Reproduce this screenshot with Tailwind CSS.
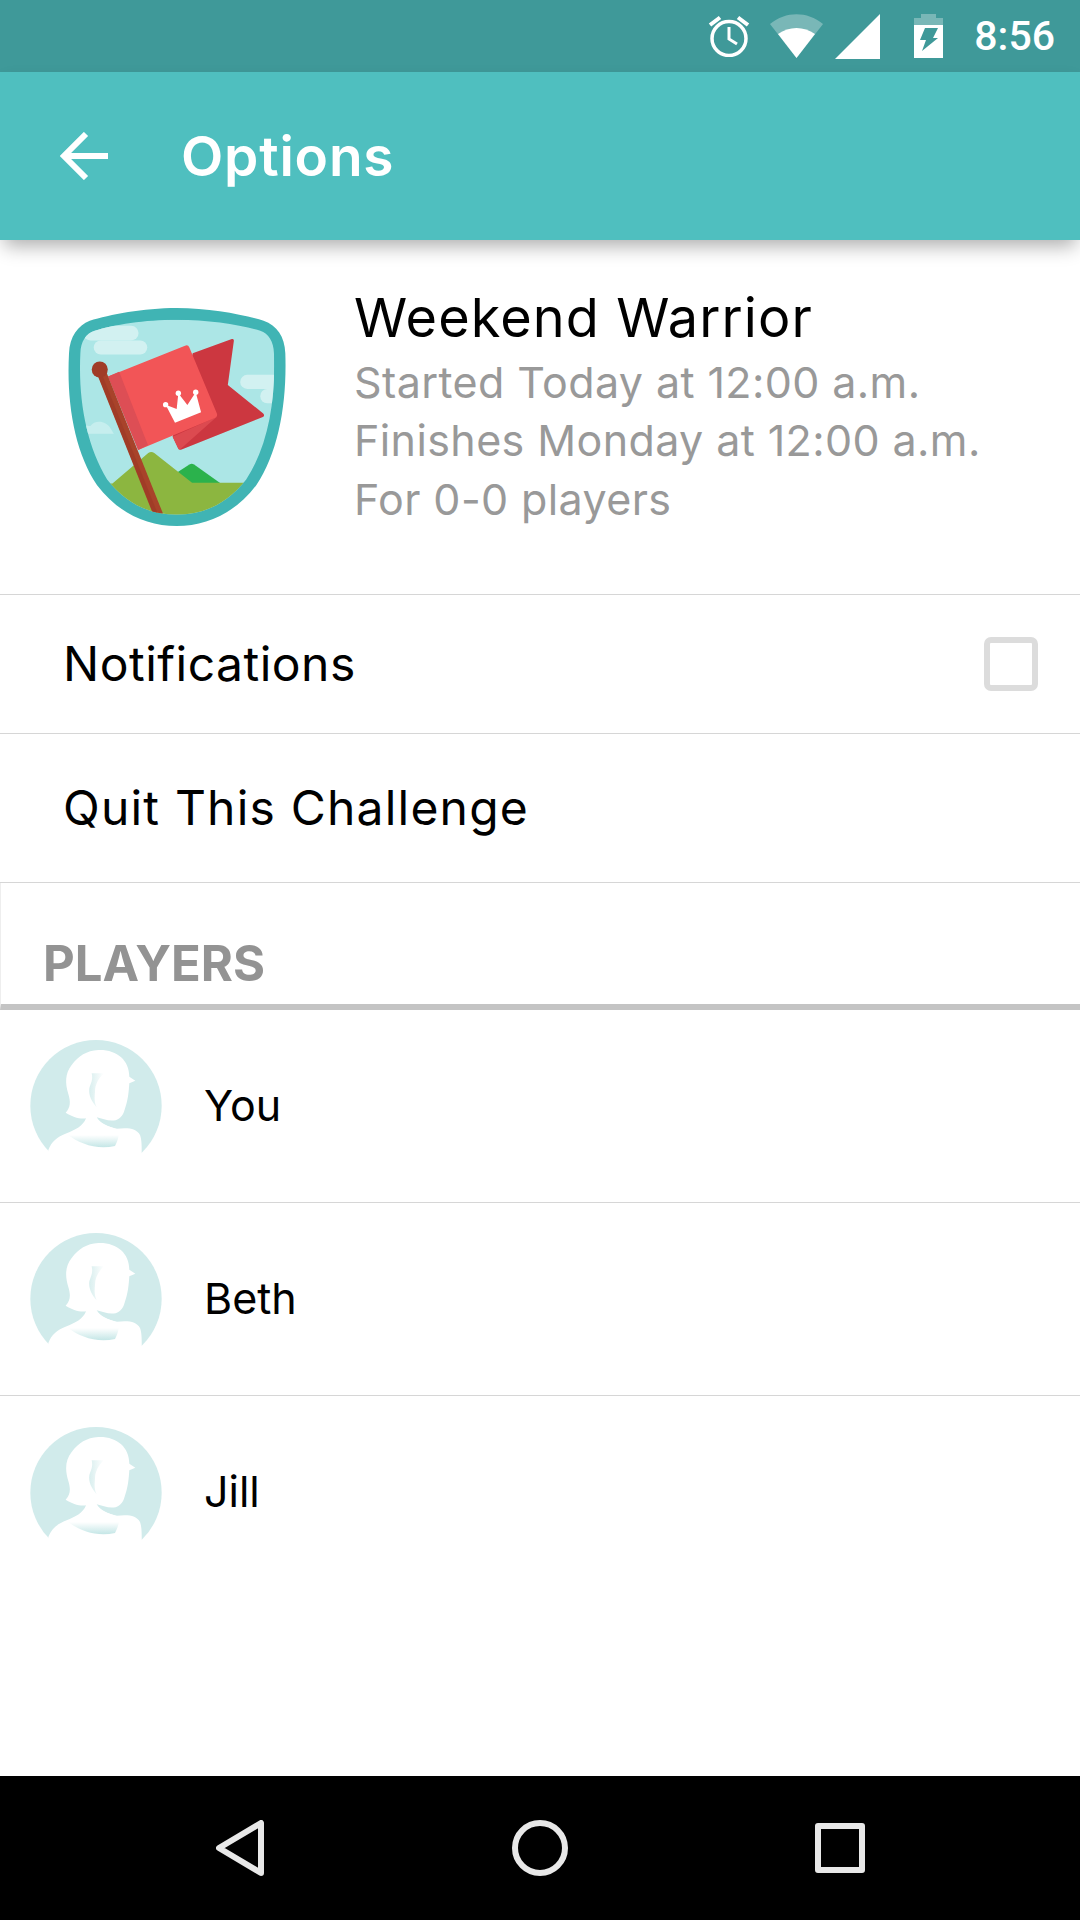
<!DOCTYPE html>
<html lang="en">
<head>
    <meta charset="UTF-8">
    <meta name="viewport" content="width=device-width, initial-scale=1.0">
    <title>Options</title>
    <script src="https://cdn.jsdelivr.net/npm/@tailwindcss/browser@4"></script>
</head>
<body class="bg-white font-['Inter','Noto_Sans',sans-serif] overflow-hidden">
    <svg class="absolute w-0 h-0">
        <defs>
            <linearGradient id="chest" x1="0" y1="0" x2="0" y2="1">
                <stop offset="0.6" stop-color="#ffffff"/>
                <stop offset="1" stop-color="#c4e6e6"/>
            </linearGradient>
            <linearGradient id="hair" x1="1" y1="0" x2="0" y2="0">
                <stop offset="0" stop-color="#ffffff"/>
                <stop offset="1" stop-color="#d8eeee"/>
            </linearGradient>
            <symbol id="avatar" viewBox="90 60 396 396">
                <circle cx="288" cy="257" r="197" fill="#d1ebeb"/>
                <path fill="#fff" d="M295 90C350 88 388 120 388 170L406 182L388 190C386 215 385 240 372 275C362 302 340 306 312 298L290 292C300 310 320 320 350 326C385 322 410 325 420 345C427 365 425 385 425 456H145L145 390C155 365 170 352 200 340C225 330 250 318 258 295C240 298 215 290 197 278C212 262 212 245 205 222C195 190 195 160 215 135C235 108 260 92 295 90Z"/>
                <path fill="url(#hair)" d="M275 160L312 160C295 175 285 195 285 215C284 230 282 245 290 262C275 245 265 225 268 205C272 190 280 180 275 160Z"/>
                <path fill="url(#chest)" d="M200 342C240 372 290 390 345 378C352 365 360 345 355 328C325 320 300 310 288 290C270 320 235 330 200 342Z"/>
            </symbol>
            <clipPath id="shield-in">
                <path d="M530 150C625 150 720 165 780 183C805 192 820 215 821 250C826 390 805 525 738 628C680 702 610 733 530 733C450 733 380 702 322 628C260 525 235 390 242 250C243 215 258 192 285 183C340 165 435 150 530 150Z"/>
            </clipPath>
        </defs>
    </svg>

    <div class="w-[1080px] h-[1920px] flex flex-col">
        <!-- status bar -->
        <div class="h-[72px] bg-[#3f9999] flex items-center justify-end text-white shrink-0">
            <svg class="w-[42px] h-[42px]" viewBox="0 0 42 42" fill="none" stroke="#fff">
                <circle cx="21" cy="23.5" r="17" stroke-width="3.5"/>
                <path d="M21 12V24L29 29" stroke-width="3"/>
                <path d="M2 10L12 2.5M40 10L30 2.5" stroke-width="4"/>
            </svg>
            <svg class="w-[53px] h-[44px] ml-[20px]" viewBox="0 0 53 44">
                <path fill="#fff" fill-opacity="0.3" d="M0 10C16 -3 37 -3 53 10L26.5 44Z"/>
                <path fill="#fff" d="M8 20C19 12 34 12 45 20L26.5 44Z"/>
            </svg>
            <svg class="w-[45px] h-[45px] ml-[12px]" viewBox="0 0 45 45">
                <path fill="#fff" d="M45 0V45H0Z"/>
            </svg>
            <svg class="w-[29px] h-[44px] ml-[34px]" viewBox="0 0 29 44">
                <path fill="#fff" fill-opacity="0.3" d="M7 0H22V4H29V11H0V4H7Z"/>
                <path fill="#fff" d="M0 11H29V44H0Z"/>
                <path fill="#3f9999" d="M11 14H24L19 24H24L8 37L12 26H6Z"/>
            </svg>
            <span class="ml-[31px] mr-[25px] font-['Roboto'] font-medium text-[41px] leading-none">8:56</span>
        </div>

        <!-- app bar -->
        <div class="relative z-10 h-[168px] bg-[#4fbfbf] flex items-center shrink-0 shadow-[0_10px_18px_-4px_rgba(0,0,0,0.32)]">
            <svg class="w-[48px] h-[48px] ml-[60px]" viewBox="0 0 48 48" fill="none" stroke="#fff" stroke-width="6">
                <path d="M48 24H3M26 2L4 24L26 46"/>
            </svg>
            <h1 class="ml-[73px] text-[55px] tracking-[0.8px] font-semibold text-white leading-none">Options</h1>
        </div>

        <main class="flex-1 flex flex-col">
            <!-- challenge summary -->
            <section class="h-[355px] flex items-center pl-[68px] border-b border-[#d6d6d6] shrink-0">
                <svg class="w-[218px] h-[218px] shrink-0" viewBox="205 115 652 652">
                    <path fill="#40b4b4" d="M530 115C630 115 730 135 790 153C830 167 853 200 855 250C860 400 835 545 768 645C705 728 620 767 530 767C440 767 355 728 292 645C225 545 200 400 208 250C210 200 235 167 270 153C330 135 430 115 530 115Z"/>
                    <g clip-path="url(#shield-in)">
                        <rect x="205" y="115" width="652" height="652" fill="#ace6e6"/>
                        <g fill="#d2f1f1">
                            <rect x="282" y="212" width="160" height="42" rx="21"/>
                            <rect x="250" y="168" width="166" height="44" rx="22"/>
                            <rect x="720" y="315" width="120" height="42" rx="21"/>
                            <rect x="780" y="357" width="60" height="43" rx="21"/>
                        </g>
                        <path fill="#c6eeee" d="M240 491V468C255 465 265 468 272 468C285 448 320 452 332 475L342 491Z"/>
                        <path fill="#2bb24c" d="M530 608L568 583Q575 579 582 583L662 640H530Z"/>
                        <path fill="#8cb640" d="M320 640H338L445 549Q454 542 463 549L576 638H745V760H320Z"/>
                        <path fill="#cc3740" d="M578 250L695 208Q702 206 701 214L683 345L788 430Q796 438 786 442L545 538Q537 541 534 534L518 500Z"/>
                        <path fill="#dc4a50" d="M518 500L650 440L540 538Q536 540 534 534Z"/>
                        <path fill="#f25557" d="M325 320L555 228Q564 224 568 233L650 430Q654 440 644 444L415 540Z"/>
                        <path fill="#dd4e55" d="M325 320L358 306L444 525L415 540Z"/>
                        <path fill="#fff" d="M497 404L530 417L535 370L562 405L587 367L603 427L525 458Z"/>
                        <circle cx="497" cy="404" r="8" fill="#fff"/>
                        <circle cx="535" cy="370" r="8" fill="#fff"/>
                        <circle cx="587" cy="367" r="8" fill="#fff"/>
                        <path stroke="#a8432a" stroke-width="28" d="M304 305L476 735"/>
                        <path stroke="#a03c27" stroke-width="12" d="M298 308L470 738"/>
                        <circle cx="300" cy="299" r="24" fill="#a03c27"/>
                    </g>
                </svg>
                <div class="ml-[68px] flex flex-col -mt-[17px]">
                    <h2 class="text-[54px] tracking-[1.1px] leading-[58px] text-black">Weekend Warrior</h2>
                    <p class="text-[43px] tracking-[0.4px] leading-[58.5px] text-[#999999] mt-[6px]">Started Today at 12:00 a.m.</p>
                    <p class="text-[43px] tracking-[0.4px] leading-[58.5px] text-[#999999]">Finishes Monday at 12:00 a.m.</p>
                    <p class="text-[43px] tracking-[0.4px] leading-[58.5px] text-[#999999]">For 0-0 players</p>
                </div>
            </section>

            <!-- settings -->
            <div class="h-[139px] flex items-center justify-between pl-[63px] pr-[42px] border-b border-[#d6d6d6] shrink-0">
                <span class="text-[48px] tracking-[0.5px] text-black">Notifications</span>
                <span class="w-[54px] h-[54px] border-[6px] border-[#dcdcdc] rounded-[7px]"></span>
            </div>
            <div class="h-[149px] flex items-center pl-[63px] border-b border-[#d6d6d6] shrink-0">
                <span class="text-[48px] tracking-[1.2px] text-black">Quit This Challenge</span>
            </div>

            <!-- players -->
            <div class="h-[127px] flex items-end pl-[42px] pb-[16px] border-b-[6px] border-b-[#c4c4c4] border-l border-l-[#eeeeee] shrink-0">
                <h3 class="text-[49px] leading-none font-bold text-[#939393]">PLAYERS</h3>
            </div>
            <div class="h-[193px] flex items-center pl-[30px] border-b border-[#d6d6d6] shrink-0">
                <svg class="w-[132px] h-[132px]"><use href="#avatar"/></svg>
                <span class="ml-[42px] -mt-[2px] text-[43px] text-black">You</span>
            </div>
            <div class="h-[193px] flex items-center pl-[30px] border-b border-[#d6d6d6] shrink-0">
                <svg class="w-[132px] h-[132px]"><use href="#avatar"/></svg>
                <span class="ml-[42px] -mt-[2px] text-[43px] text-black">Beth</span>
            </div>
            <div class="h-[193px] flex items-center pl-[30px] shrink-0">
                <svg class="w-[132px] h-[132px]"><use href="#avatar"/></svg>
                <span class="ml-[42px] -mt-[2px] text-[43px] text-black">Jill</span>
            </div>
        </main>

        <!-- nav bar -->
        <nav class="h-[144px] bg-black flex justify-center items-center shrink-0">
            <div class="w-[300px] flex justify-center">
                <svg class="w-[48px] h-[56px]" viewBox="0 0 48 56" fill="none" stroke="#e8e8e8" stroke-width="6" stroke-linejoin="round">
                    <path d="M45 3V53L3 28Z"/>
                </svg>
            </div>
            <div class="w-[300px] flex justify-center">
                <span class="w-[56px] h-[56px] rounded-full border-[6px] border-[#e8e8e8]"></span>
            </div>
            <div class="w-[300px] flex justify-center">
                <span class="w-[50px] h-[50px] rounded-[3px] border-[6px] border-[#e8e8e8]"></span>
            </div>
        </nav>
    </div>
</body>
</html>
